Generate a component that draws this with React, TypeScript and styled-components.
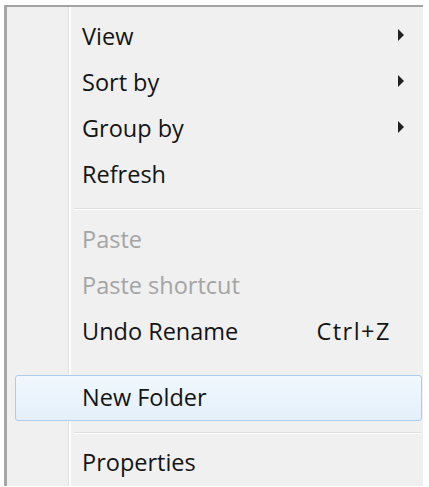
import React from "react";
import styled, { createGlobalStyle } from "styled-components";

const Global = createGlobalStyle`
  html, body { margin: 0; padding: 0; background: #ffffff; }
  body { font-family: "Open Sans", "Noto Sans", sans-serif; }
`;

const Menu = styled.div`
  margin: 5px 0 0 4px;
  width: 419px;
  min-height: calc(100vh - 7px);
  box-sizing: border-box;
  border-top: 2px solid #a3a3a3;
  border-left: 3px solid #a6a6a6;
  padding-top: 7px;
  background: linear-gradient(
    to right,
    #f0f0f0 0,
    #f0f0f0 61px,
    #e0e0e0 61px,
    #e0e0e0 62px,
    #ffffff 62px,
    #ffffff 64px,
    #f0f0f0 64px
  );
  display: flex;
  flex-direction: column;
`;

const Row = styled.div<{ $hover?: boolean }>`
  height: 46px;
  box-sizing: border-box;
  margin: 0 1px 0 8px;
  padding: 0 17px 0 67px;
  display: flex;
  align-items: center;
  border: 1px solid ${(p) => (p.$hover ? "#a9cdeb" : "transparent")};
  border-radius: 3px;
  background: ${(p) =>
    p.$hover ? "linear-gradient(to bottom, #f1f8fe, #e3effa)" : "transparent"};
`;

const Label = styled.span<{ $disabled?: boolean }>`
  flex: 1;
  font-size: 23.5px;
  letter-spacing: 0;
  color: ${(p) => (p.$disabled ? "#a4a4a4" : "#141414")};
  margin-left: -1px;
  line-height: 1;
`;

const Shortcut = styled.span`
  font-size: 23.5px;
  letter-spacing: 1.5px;
  color: #141414;
  margin-right: 7px;
  line-height: 1;
`;

const ArrowSlot = styled.span`
  width: 6px;
  height: 14px;
  display: flex;
  align-items: center;
  margin-top: -4px;
`;

const Separator = styled.div<{ $top: number; $h: number }>`
  height: ${(p) => p.$h}px;
  box-sizing: border-box;
  padding-top: ${(p) => p.$top}px;
  margin: 0 2px 0 67px;
  &::before {
    content: "";
    display: block;
    height: 1px;
    background: #dedede;
    border-bottom: 1px solid #ffffff;
  }
`;

const Gap = styled.div<{ $h: number }>`
  height: ${(p) => p.$h}px;
`;

const Arrow = () => (
  <svg width="6" height="12" viewBox="0 0 6 12">
    <path d="M0 0 L6 6 L0 12 Z" fill="#202020" />
  </svg>
);

type Item = {
  label: string;
  disabled?: boolean;
  sub?: boolean;
  shortcut?: string;
  hover?: boolean;
};

const MenuItem = ({ label, disabled, sub, shortcut, hover }: Item) => (
  <Row $hover={hover}>
    <Label $disabled={disabled}>{label}</Label>
    {shortcut && <Shortcut>{shortcut}</Shortcut>}
    <ArrowSlot>{sub && <Arrow />}</ArrowSlot>
  </Row>
);

export default function App() {
  return (
    <>
      <Global />
      <Menu>
        <MenuItem label="View" sub />
        <MenuItem label="Sort by" sub />
        <MenuItem label="Group by" sub />
        <MenuItem label="Refresh" />
        <Separator $top={10} $h={19} />
        <MenuItem label="Paste" disabled />
        <MenuItem label="Paste shortcut" disabled />
        <MenuItem label="Undo Rename" shortcut="Ctrl+Z" />
        <Gap $h={20} />
        <MenuItem label="New Folder" hover />
        <Separator $top={11} $h={19} />
        <MenuItem label="Properties" />
      </Menu>
    </>
  );
}
